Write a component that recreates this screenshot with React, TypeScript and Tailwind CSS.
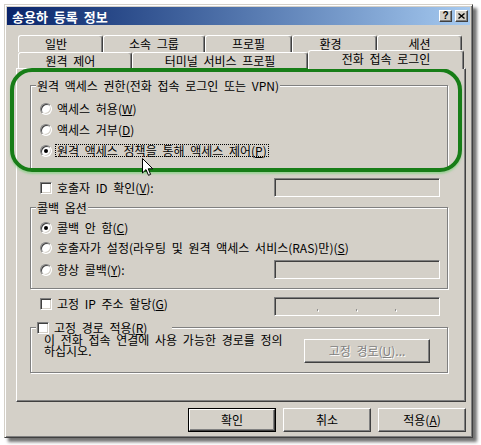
import React from "react";

// classic win9x/2000 bevels
const raised =
  "border border-t-white border-l-white border-r-[#404040] border-b-[#404040] shadow-[inset_-1px_-1px_0_#808080]";
const sunken =
  "border border-t-[#808080] border-l-[#808080] border-r-white border-b-white shadow-[inset_1px_1px_0_#404040,inset_-1px_-1px_0_#d4d0c8]";
const tabBase =
  "flex items-center justify-center rounded-t-[3px] border-t border-l border-r border-t-white border-l-white border-r-[#404040] bg-[#d4d0c8] leading-none shadow-[inset_-1px_0_0_#808080]";

function Radio({ on = false }: { on?: boolean }) {
  return (
    <span
      className={`inline-flex h-[12px] w-[12px] shrink-0 items-center justify-center rounded-full bg-white ${sunken}`}
    >
      {on && <span className="h-[4px] w-[4px] rounded-full bg-black" />}
    </span>
  );
}

function Check() {
  return <span className={`inline-block h-[12px] w-[12px] shrink-0 bg-white ${sunken}`} />;
}

function Field({ ip = false }: { ip?: boolean }) {
  return (
    <div className={`ml-auto flex h-[19px] w-[166px] shrink-0 items-center bg-[#d4d0c8] ${sunken}`}>
      {ip && (
        <div className="mt-[6px] flex gap-[38px] pl-[42px]">
          <span className="h-[2px] w-[1px] bg-[#909090] shadow-[1px_1px_0_#fff]" />
          <span className="h-[2px] w-[1px] bg-[#909090] shadow-[1px_1px_0_#fff]" />
          <span className="h-[2px] w-[1px] bg-[#909090] shadow-[1px_1px_0_#fff]" />
        </div>
      )}
    </div>
  );
}

function Group({
  label,
  className,
  children,
}: {
  label: React.ReactNode;
  className: string;
  children: React.ReactNode;
}) {
  return (
    <div
      className={`relative ml-[13px] w-[418px] shrink-0 border border-[#808080] shadow-[inset_1px_1px_0_#fff,1px_1px_0_#fff] ${className}`}
    >
      <div className="absolute -top-[6px] left-[5px] flex h-[11px] items-center bg-[#d4d0c8] px-[1px] leading-[11px]">
        {label}
      </div>
      {children}
    </div>
  );
}

export default function App() {
  return (
    <div className="relative h-[445px] w-[481px] overflow-hidden bg-white pl-[4px] pt-[4px] text-[12px] leading-[14px] text-black [font-family:'Noto_Sans_CJK_KR','Noto_Sans_CJK_SC',sans-serif] [word-spacing:3px]">
      <div className="flex h-[434px] w-[469px] flex-col border border-t-[#d4d0c8] border-l-[#d4d0c8] border-r-[#404040] border-b-[#404040] bg-[#d4d0c8] p-[2px] shadow-[inset_1px_1px_0_#fff,inset_-1px_-1px_0_#808080,4px_4px_3px_rgba(0,0,0,0.55)]">
        {/* Title bar */}
        <div className="flex h-[18px] shrink-0 items-center bg-linear-to-r from-[#0a246a] to-[#a6caf0] pl-[5px] pr-[2px]">
          <span className="text-[13px] font-bold leading-none text-white">송용하 등록 정보</span>
          <div className="ml-auto flex gap-[3px]">
            <div className={`flex h-[12px] w-[13px] items-center justify-center bg-[#d4d0c8] ${raised}`}>
              <span className="text-[10px] font-bold leading-none [font-family:'Liberation_Sans',sans-serif]">?</span>
            </div>
            <div className={`flex h-[12px] w-[13px] items-center justify-center bg-[#d4d0c8] ${raised}`}>
              <svg width="7" height="6" viewBox="0 0 7 6">
                <path d="M0.5 0.5 L6.5 5.5 M6.5 0.5 L0.5 5.5" stroke="#000" strokeWidth="1.4" />
              </svg>
            </div>
          </div>
        </div>

        {/* Tabs */}
        <div className="ml-[11px] mt-[10px] flex h-[17px] shrink-0">
          <div className={`${tabBase} h-[17px] w-[85px] pr-[9px]`}>일반</div>
          <div className={`${tabBase} h-[17px] w-[102px]`}>소속 그룹</div>
          <div className={`${tabBase} h-[17px] w-[87px]`}>프로필</div>
          <div className={`${tabBase} h-[17px] w-[85px] pr-[8px]`}>환경</div>
          <div className={`${tabBase} h-[17px] w-[85px]`}>세션</div>
        </div>
        <div className="ml-[11px] flex h-[16px] shrink-0">
          <div className={`${tabBase} h-[16px] w-[114px] pr-[9px]`}>원격 제어</div>
          <div className={`${tabBase} h-[16px] w-[176px]`}>터미널 서비스 프로필</div>
          <div className={`${tabBase} relative z-10 -mt-[2px] h-[19px] w-[156px] pb-[3px]`}>전화 접속 로그인</div>
        </div>

        {/* Tab page */}
        <div className="ml-[9px] flex h-[334px] w-[450px] shrink-0 flex-col border border-t-white border-l-white border-r-[#404040] border-b-[#404040] shadow-[inset_-1px_-1px_0_#808080]">
          <Group
            className="mt-[16px] h-[84px] pt-[12px] pl-[9px]"
            label={<span>원격 액세스 권한(전화 접속 로그인 또는 VPN)</span>}
          >
            <div className="flex h-[21px] items-center gap-[5px]">
              <Radio />
              <span>
                액세스 허용(<u>W</u>)
              </span>
            </div>
            <div className="flex h-[21px] items-center gap-[5px]">
              <Radio />
              <span>
                액세스 거부(<u>D</u>)
              </span>
            </div>
            <div className="flex h-[21px] items-center gap-[3px]">
              <Radio on />
              <span className="border border-dotted border-black px-[1px] leading-[11px]">
                원격 액세스 정책을 통해 액세스 제어(<u>P</u>)
              </span>
            </div>
          </Group>

          <div className="ml-[13px] mt-[9px] flex h-[19px] w-[418px] shrink-0 items-center gap-[5px] pl-[10px] pr-[8px]">
            <Check />
            <span>
              호출자 ID 확인(<u>V</u>):
            </span>
            <Field />
          </div>

          <Group className="mt-[10px] h-[82px] pt-[10px] pl-[9px] pr-[7px]" label={<span>콜백 옵션</span>}>
            <div className="flex h-[20px] items-center gap-[5px]">
              <Radio on />
              <span>
                콜백 안 함(<u>C</u>)
              </span>
            </div>
            <div className="flex h-[20px] items-center gap-[5px]">
              <Radio />
              <span>
                호출자가 설정(라우팅 및 원격 액세스 서비스(RAS)만)(<u>S</u>)
              </span>
            </div>
            <div className="mt-[2px] flex h-[19px] items-center gap-[5px]">
              <Radio />
              <span>
                항상 콜백(<u>Y</u>):
              </span>
              <Field />
            </div>
          </Group>

          <div className="ml-[13px] mt-[8px] flex h-[19px] w-[418px] shrink-0 items-start gap-[5px] pl-[10px] pr-[8px]">
            <div className="flex h-[13px] items-center gap-[5px]">
              <Check />
              <span>
                고정 IP 주소 할당(<u>G</u>)
              </span>
            </div>
            <Field ip />
          </div>

          <Group
            className="mt-[11px] flex h-[46px] pl-[13px] pr-[17px]"
            label={
              <div className="flex items-center gap-[5px] pr-[24px]">
                <Check />
                <span>
                  고정 경로 적용(<u>R</u>)
                </span>
              </div>
            }
          >
            <p className="pt-[6px] leading-[11px]">
              이 전화 접속 연결에 사용 가능한 경로를 정의
              <br />
              하십시오.
            </p>
            <div
              className={`ml-auto mt-[11px] flex h-[24px] w-[126px] items-center justify-center text-[#808080] [text-shadow:1px_1px_0_#fff] ${raised}`}
            >
              고정 경로(<u>U</u>)...
            </div>
          </Group>
        </div>

        {/* Buttons */}
        <div className="mt-[6px] flex justify-end gap-[7px] pr-[4px]">
          <div className="h-[24px] w-[88px] border border-black">
            <div className={`flex h-full w-full items-center justify-center ${raised}`}>확인</div>
          </div>
          <div className={`flex h-[24px] w-[88px] items-center justify-center ${raised}`}>취소</div>
          <div className={`flex h-[24px] w-[88px] items-center justify-center ${raised}`}>
            적용(<u>A</u>)
          </div>
        </div>
      </div>

      {/* annotation highlight */}
      <div className="pointer-events-none absolute left-[10px] top-[68px] h-[104px] w-[452px] rounded-[22px] border-[4px] border-[#177d17] shadow-[0_2px_2px_rgba(120,210,120,0.6)]" />

      {/* mouse pointer */}
      <svg className="absolute left-[141px] top-[157px]" width="13" height="20" viewBox="0 0 13 20">
        <path
          d="M1.5 1.5 L1.5 16 L5 12.6 L7.5 18.3 L9.6 17.4 L7.2 11.8 L11.8 11.8 Z"
          fill="#fff"
          stroke="#000"
          strokeWidth="1"
          strokeLinejoin="miter"
        />
      </svg>
    </div>
  );
}
